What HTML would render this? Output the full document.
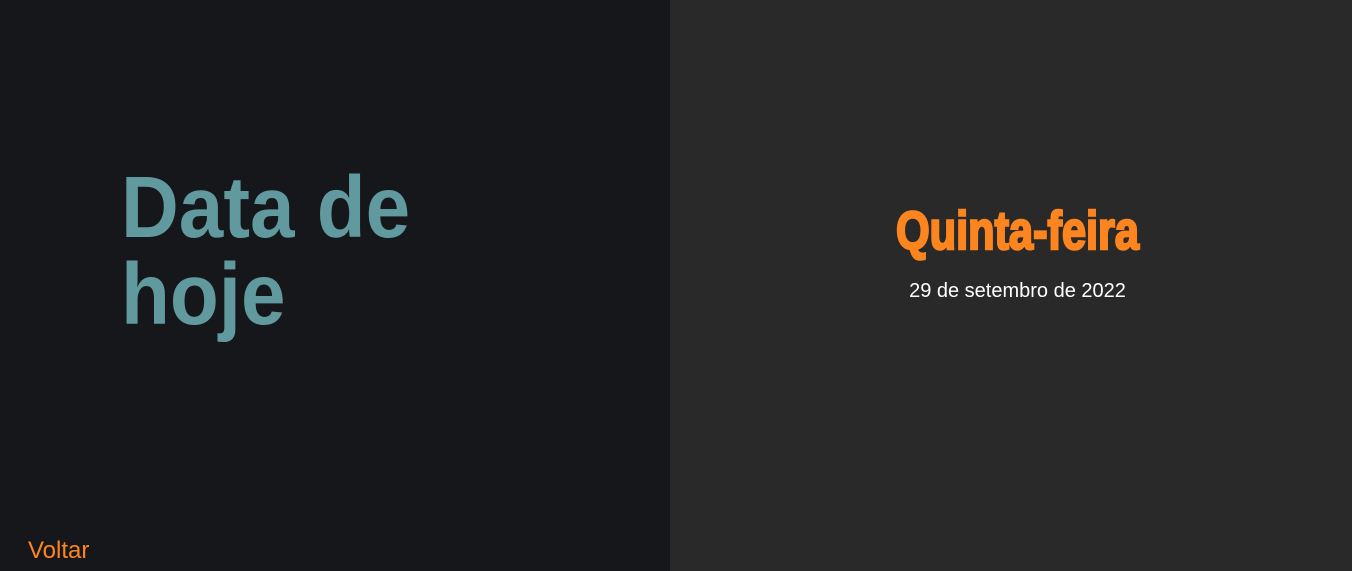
<!DOCTYPE html>
<html><head><meta charset="utf-8"><style>
html,body{margin:0;width:1352px;height:571px;overflow:hidden;font-family:"Liberation Sans",Arial,sans-serif}
.l{position:absolute;left:0;top:0;width:670px;height:571px;background:#16171b}
.r{position:absolute;left:670px;top:0;width:682px;height:571px;background:#292929}
.t{position:absolute;left:121px;font-size:87px;font-weight:bold;color:#619a9e;line-height:87px;white-space:nowrap;transform:scaleX(0.92);transform-origin:0 0}
.d{position:absolute;left:670px;width:695px;text-align:center;top:279px;color:#fff;font-size:20px;line-height:24px}
.v{position:absolute;left:28px;top:537px;color:#fd8520;font-size:24px;line-height:28px}
</style></head><body>
<div class="l"></div><div class="r"></div>
<div class="t" style="top:164px">Data de</div>
<div class="t" style="top:251px">hoje</div>
<svg style="position:absolute;left:0;top:0" width="1352" height="571"><text x="896" y="249" textLength="243" lengthAdjust="spacingAndGlyphs" style="font-family:'Liberation Sans',sans-serif;font-weight:900;font-size:54px;stroke:#fd8520;stroke-width:2.5px" fill="#fd8520">Quinta-feira</text></svg>
<div class="d">29 de setembro de 2022</div>
<div class="v">Voltar</div>
</body></html>
